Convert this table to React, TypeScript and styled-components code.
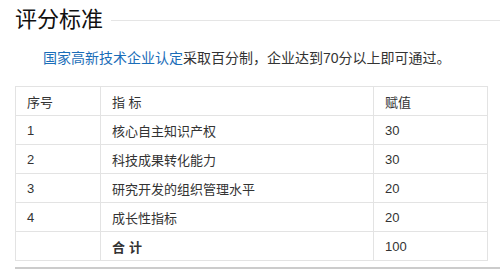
import styled, { createGlobalStyle } from 'styled-components';

const GlobalStyle = createGlobalStyle`
  html, body {
    margin: 0;
    padding: 0;
    background: #fff;
  }
  body {
    font-family: "Liberation Sans", "Noto Sans CJK SC", sans-serif;
    color: #333;
  }
`;

const Page = styled.div`
  width: 500px;
  height: 276px;
  overflow: hidden;
  padding-left: 15px;
  box-sizing: border-box;
`;

const TitleRow = styled.div`
  display: flex;
  align-items: center;
  height: 30px;
  padding-top: 5px;
`;

const Title = styled.h3`
  margin: 0;
  font-size: 22px;
  font-weight: 400;
  line-height: 30px;
  color: #111;
`;

const TitleLine = styled.div`
  flex: 1;
  height: 1px;
  margin-left: 8px;
  background: #e5e5e5;
`;

const Intro = styled.p`
  margin: 12px 0 0;
  text-indent: 28px;
  font-size: 14px;
  line-height: 22px;
  color: #333;
`;

const Link = styled.a`
  color: #1a6db8;
  text-decoration: none;
`;

const Table = styled.table`
  margin-top: 17px;
  width: 473px;
  border-collapse: collapse;
  font-size: 13px;
  color: #333;
`;

const Cell = styled.td<{ $w?: number; $bold?: boolean }>`
  border: 1px solid #e3e3e3;
  height: 29px;
  padding: 0 0 0 11px;
  box-sizing: border-box;
  width: ${({ $w }) => ($w ? `${$w}px` : 'auto')};
  font-weight: ${({ $bold }) => ($bold ? 700 : 400)};
  letter-spacing: ${({ $bold }) => ($bold ? '4px' : '0')};
  text-align: left;
  vertical-align: middle;
`;

const BottomBar = styled.div`
  margin-top: 6px;
  height: 2px;
  background: #cccccc;
`;

const rows = [
  ['1', '核心自主知识产权', '30'],
  ['2', '科技成果转化能力', '30'],
  ['3', '研究开发的组织管理水平', '20'],
  ['4', '成长性指标', '20'],
];

export default function App() {
  return (
    <Page>
      <GlobalStyle />
      <TitleRow>
        <Title>评分标准</Title>
        <TitleLine />
      </TitleRow>
      <Intro>
        <Link href="#">国家高新技术企业认定</Link>采取百分制，企业达到70分以上即可通过。
      </Intro>
      <Table>
        <tbody>
          <tr>
            <Cell $w={85}>序号</Cell>
            <Cell $w={273}>指 标</Cell>
            <Cell>赋值</Cell>
          </tr>
          {rows.map((r) => (
            <tr key={r[0]}>
              <Cell>{r[0]}</Cell>
              <Cell>{r[1]}</Cell>
              <Cell>{r[2]}</Cell>
            </tr>
          ))}
          <tr>
            <Cell />
            <Cell $bold>合计</Cell>
            <Cell>100</Cell>
          </tr>
        </tbody>
      </Table>
      <BottomBar />
    </Page>
  );
}
